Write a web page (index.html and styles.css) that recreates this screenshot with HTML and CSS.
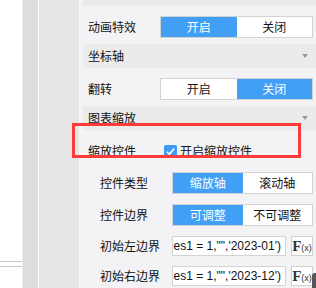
FILE: index.html
```html
<!DOCTYPE html>
<html lang="zh-CN">
<head>
<meta charset="utf-8">
<title>图表属性</title>
<link rel="stylesheet" href="styles.css">
</head>
<body>
<div class="app">
  <div class="side"><div class="side-lines"></div></div>
  <div class="gutter-a"></div>
  <div class="gutter-b"></div>
  <div class="panel">
    <div class="header head-top"><span>动画</span><i class="caret"></i></div>
    <div class="body">
      <div class="row">
        <span class="label">动画特效</span>
        <div class="seg"><span class="on">开启</span><span>关闭</span></div>
      </div>
    </div>
    <div class="header"><span>坐标轴</span><i class="caret"></i></div>
    <div class="body">
      <div class="row">
        <span class="label">翻转</span>
        <div class="seg"><span>开启</span><span class="on">关闭</span></div>
      </div>
    </div>
    <div class="header"><span>图表缩放</span><i class="caret"></i></div>
    <div class="body">
      <div class="row">
        <span class="label">缩放控件</span>
        <span class="check"><svg width="13" height="13" viewBox="0 0 13 13"><path d="M3 6.8 L5.4 9.2 L10.2 3.6" fill="none" stroke="#fff" stroke-width="1.6"/></svg></span>
        <span class="check-text">开启缩放控件</span>
      </div>
      <div class="row sub">
        <span class="label">控件类型</span>
        <div class="seg"><span class="on">缩放轴</span><span>滚动轴</span></div>
      </div>
      <div class="row sub">
        <span class="label">控件边界</span>
        <div class="seg"><span class="on">可调整</span><span>不可调整</span></div>
      </div>
      <div class="row sub short">
        <span class="label">初始左边界</span>
        <div class="input"><span>ies1 = 1,"",'2023-01')</span></div>
        <div class="fx">F<small>(x)</small></div>
      </div>
      <div class="row sub short">
        <span class="label">初始右边界</span>
        <div class="input"><span>ies1 = 1,"",'2023-12')</span></div>
        <div class="fx">F<small>(x)</small></div>
      </div>
    </div>
  </div>
  <div class="mark"></div>
  <div class="thumb"></div>
</div>
</body>
</html>
```

FILE: styles.css
```css
* {
  box-sizing: border-box;
  margin: 0;
  padding: 0;
}

html,
body {
  width: 316px;
  height: 288px;
  overflow: hidden;
  background: #fff;
}

body {
  font-family: "Noto Sans CJK SC", "Liberation Sans", sans-serif;
  font-size: 12px;
  color: #111;
}

.app {
  position: relative;
  display: flex;
  height: 288px;
}

.side {
  width: 22px;
  flex: none;
  background: #fff;
  padding-top: 261px;
}

.side-lines {
  height: 6px;
  border-top: 1px solid #c6c6c6;
  border-bottom: 1px solid #c6c6c6;
}

.gutter-a {
  width: 16px;
  flex: none;
  background: #dedede;
  border-left: 1px solid #ececec;
}

.gutter-b {
  width: 41px;
  flex: none;
  background: #e6e6e6;
  border-left: 1px solid #fafafa;
}

.panel {
  flex: 1;
  min-width: 0;
  background: #f3f3f5;
  padding-left: 4px;
  overflow: hidden;
}

.header {
  height: 24px;
  background: #ebebeb;
  display: flex;
  align-items: center;
  justify-content: space-between;
  padding: 0 8px 0 5px;
  line-height: 24px;
}

.head-top {
  margin-top: -18px;
}

.caret {
  width: 0;
  height: 0;
  border-left: 3px solid transparent;
  border-right: 3px solid transparent;
  border-top: 4px solid #9a9a9a;
}

.body {
  display: flex;
  flex-direction: column;
  gap: 10px;
  padding: 10px 0 6px;
}

.row {
  display: flex;
  align-items: center;
  height: 22px;
  padding-right: 3px;
}

.row.sub {
  padding-left: 12px;
}

.row.short {
  height: 20px;
}

.label {
  width: 77px;
  flex: none;
  padding-left: 5px;
  white-space: nowrap;
  line-height: 22px;
}

.seg {
  flex: 1;
  display: flex;
  height: 22px;
  border: 1px solid #d3d3d3;
  background: #fff;
}

.seg span {
  flex: 1;
  text-align: center;
  line-height: 20px;
}

.seg .on {
  background: #419ff6;
  color: #fff;
}

.check {
  width: 13px;
  height: 13px;
  margin-left: 4px;
  margin-right: 3px;
  background: #3d9bf2;
  border-radius: 2px;
  display: flex;
}

.check-text {
  line-height: 22px;
}

.input {
  flex: 1;
  min-width: 0;
  height: 20px;
  border: 1px solid #d4d4d4;
  background: #fff;
  display: flex;
  justify-content: flex-end;
  align-items: center;
  overflow: hidden;
  padding-right: 4px;
  font-family: "Liberation Sans", Arial, sans-serif;
  font-size: 12px;
  color: #111;
  white-space: nowrap;
}

.input span {
  flex: none;
}

.fx {
  width: 22px;
  height: 20px;
  flex: none;
  margin-left: 5px;
  border: 1px solid #d0d0d0;
  background: #fff;
  display: flex;
  align-items: center;
  justify-content: center;
  font-family: "Liberation Serif", serif;
  font-size: 15px;
  font-weight: bold;
  color: #333;
  line-height: 1;
}

.fx small {
  font-size: 9px;
  font-weight: normal;
  font-family: "Liberation Sans", sans-serif;
  margin-top: 4px;
}

.mark {
  position: absolute;
  left: 72px;
  top: 123px;
  width: 229px;
  height: 35px;
  border: 3px solid #fb3a3a;
}

.thumb {
  position: absolute;
  right: 0;
  top: 273px;
  width: 4px;
  height: 20px;
  background: #555;
  border-top-left-radius: 3px;
}
```
